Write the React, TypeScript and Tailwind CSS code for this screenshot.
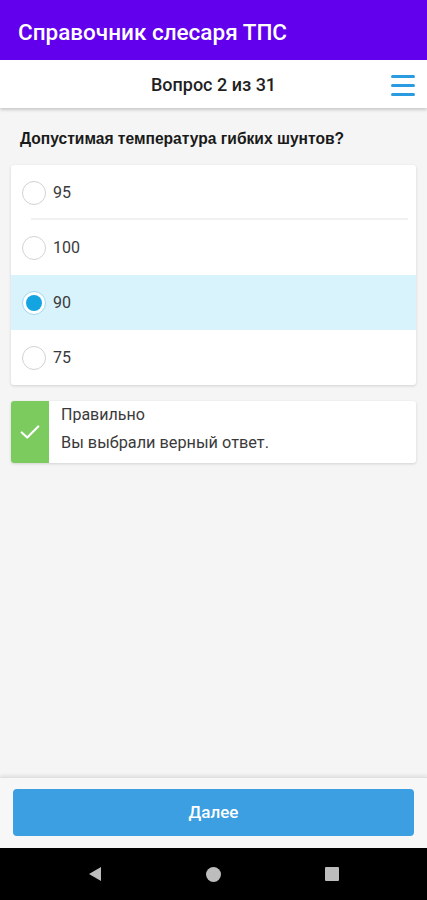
import React from "react";

const options = [
  { label: "95", selected: false },
  { label: "100", selected: false },
  { label: "90", selected: true },
  { label: "75", selected: false },
];

const App = () => {
  return (
    <div
      className="w-[427px] h-[900px] flex flex-col bg-[#f5f5f5] overflow-hidden"
      style={{ fontFamily: "Roboto, 'Noto Sans', sans-serif" }}
    >
      {/* App bar */}
      <header className="h-[60px] shrink-0 bg-[#6200ee] flex items-center px-[18px] pt-[5px]">
        <h1 className="text-white text-[22.5px] font-medium">Справочник слесаря ТПС</h1>
      </header>

      {/* Question counter */}
      <div className="h-[48px] shrink-0 bg-white relative flex items-center justify-center shadow-[0_2px_3px_rgba(0,0,0,0.18)] z-10">
        <span className="text-[18px] text-[#1f1f1f] font-medium">Вопрос 2 из 31</span>
        <button className="absolute right-[12px] top-[15px] flex flex-col gap-[6px]">
          <span className="block w-[24px] h-[3px] rounded-full bg-[#2a9be0]" />
          <span className="block w-[24px] h-[3px] rounded-full bg-[#2a9be0]" />
          <span className="block w-[24px] h-[3px] rounded-full bg-[#2a9be0]" />
        </button>
      </div>

      {/* Content */}
      <main className="flex-1 flex flex-col px-[11px]">
        <p
          className="pt-[20px] pb-[15px] pl-[9px] text-[15.6px] leading-[22px] font-bold text-[#1a1a1a]"
          style={{ fontFamily: "'Liberation Sans', Arial, sans-serif" }}
        >
          Допустимая температура гибких шунтов?
        </p>

        <div className="bg-white rounded-[3px] shadow-[0_1px_3px_rgba(0,0,0,0.15)] overflow-hidden">
          {options.map((o, i) => (
            <div
              key={o.label}
              className={`h-[55px] flex items-center pl-[11px] ${o.selected ? "bg-[#d8f3fc]" : ""}`}
            >
              <div className="relative h-full flex-1 flex items-center">
                {o.selected ? (
                  <span className="w-[24px] h-[24px] rounded-full border border-[#9fd8f0] bg-white flex items-center justify-center">
                    <span className="w-[16px] h-[16px] rounded-full bg-[#14a4e2]" />
                  </span>
                ) : (
                  <span className="w-[24px] h-[24px] rounded-full border border-[#d2d2d2] bg-white" />
                )}
                <span className="ml-[7px] text-[16px] text-[#3a3a3a]">{o.label}</span>
                {i === 0 && (
                  <span className="absolute left-[9px] right-[8px] bottom-0 h-[2px] bg-[#f1f1f1]" />
                )}
              </div>
            </div>
          ))}
        </div>

        {/* Feedback */}
        <div className="mt-[16px] h-[62px] bg-white rounded-[3px] shadow-[0_1px_3px_rgba(0,0,0,0.15)] flex overflow-hidden">
          <div className="w-[38px] bg-[#7ccb5f] flex items-center justify-center">
            <svg width="22" height="22" viewBox="0 0 24 24" fill="none">
              <path d="M3 12.5l6 5.5L21 6" stroke="white" strokeWidth="2.4" strokeLinecap="round" strokeLinejoin="round" />
            </svg>
          </div>
          <div className="flex flex-col pl-[12px] pt-[3px]">
            <span className="text-[16px] text-[#3a3a3a] leading-[22px]">Правильно</span>
            <span className="mt-[6px] text-[16.3px] text-[#3a3a3a] leading-[22px]">Вы выбрали верный ответ.</span>
          </div>
        </div>
      </main>

      {/* Bottom button */}
      <div className="h-[71px] shrink-0 bg-[#f7f7f7] border-t border-[#e0e0e0] shadow-[0_-2px_3px_rgba(0,0,0,0.08)] px-[13px] pt-[11px]">
        <button className="w-full h-[47px] rounded-[4px] bg-[#3b9fe2] text-white text-[17px] font-medium">
          Далее
        </button>
      </div>

      {/* Android nav bar */}
      <nav className="h-[52px] shrink-0 bg-black flex items-center justify-center gap-[104px]">
        <svg width="14" height="16" viewBox="0 0 14 16">
          <path d="M13 1L1 8l12 7z" fill="#bdbdbd" />
        </svg>
        <span className="w-[15px] h-[15px] rounded-full bg-[#bdbdbd]" />
        <span className="w-[14px] h-[14px] bg-[#bdbdbd] rounded-[1px]" />
      </nav>
    </div>
  );
};

export default App;
